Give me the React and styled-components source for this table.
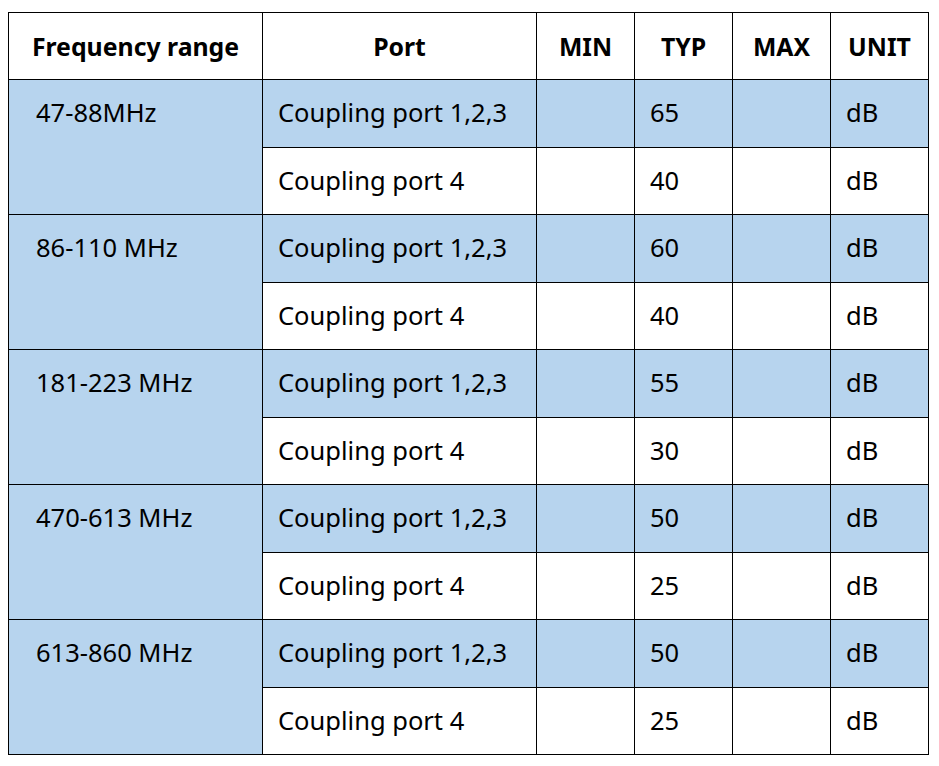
import React from "react";
import styled, { createGlobalStyle } from "styled-components";

const GlobalStyle = createGlobalStyle`
    body {
        margin: 0;
        background: #fff;
        font-family: "Noto Sans", "Open Sans", Arial, sans-serif;
        color: #000;
    }
`;

const rows = [
    { range: "47-88MHz", typ: ["65", "40"] },
    { range: "86-110 MHz", typ: ["60", "40"] },
    { range: "181-223 MHz", typ: ["55", "30"] },
    { range: "470-613 MHz", typ: ["50", "25"] },
    { range: "613-860 MHz", typ: ["50", "25"] },
];

const App = () => {
    return (
        <Page>
            <GlobalStyle />
            <Table>
                <colgroup>
                    <col style={{ width: 254 }} />
                    <col style={{ width: 274 }} />
                    <col style={{ width: 98 }} />
                    <col style={{ width: 98 }} />
                    <col style={{ width: 98 }} />
                    <col style={{ width: 98 }} />
                </colgroup>
                <thead>
                    <HeadRow>
                        <HeadCell>Frequency range</HeadCell>
                        <HeadCell>Port</HeadCell>
                        <HeadCell>MIN</HeadCell>
                        <HeadCell>TYP</HeadCell>
                        <HeadCell>MAX</HeadCell>
                        <HeadCell>UNIT</HeadCell>
                    </HeadRow>
                </thead>
                <tbody>
                    {rows.map((row) => (
                        <React.Fragment key={row.range}>
                            <BodyRow>
                                <RangeCell rowSpan={2}>{row.range}</RangeCell>
                                <Cell $shaded>Coupling port 1,2,3</Cell>
                                <Cell $shaded></Cell>
                                <Cell $shaded>{row.typ[0]}</Cell>
                                <Cell $shaded></Cell>
                                <Cell $shaded>dB</Cell>
                            </BodyRow>
                            <BodyRow>
                                <Cell>Coupling port 4</Cell>
                                <Cell></Cell>
                                <Cell>{row.typ[1]}</Cell>
                                <Cell></Cell>
                                <Cell>dB</Cell>
                            </BodyRow>
                        </React.Fragment>
                    ))}
                </tbody>
            </Table>
        </Page>
    );
};

// Styled Components
const Page = styled.div`
    padding: 12px 0 0 8px;
`;

const Table = styled.table`
    border-collapse: collapse;
    table-layout: fixed;
    width: 921px;
    font-size: 25.5px;
`;

const HeadRow = styled.tr`
    height: 67px;
`;

const HeadCell = styled.th`
    border: 1px solid #000;
    font-weight: 700;
    font-size: 24.8px;
    text-align: center;
    vertical-align: middle;
    padding: 0 2px 1px;
    white-space: nowrap;
    overflow: visible;
`;

const BodyRow = styled.tr`
    height: 67.5px;
`;

const Cell = styled.td`
    border: 1px solid #000;
    background: ${(props) => (props.$shaded ? "#b7d4ee" : "#fff")};
    padding: 0 0 2px 15px;
    vertical-align: middle;
    white-space: nowrap;
`;

const RangeCell = styled.td`
    border: 1px solid #000;
    background: #b7d4ee;
    padding: 15px 0 0 27px;
    vertical-align: top;
    white-space: nowrap;
`;

export default App;
